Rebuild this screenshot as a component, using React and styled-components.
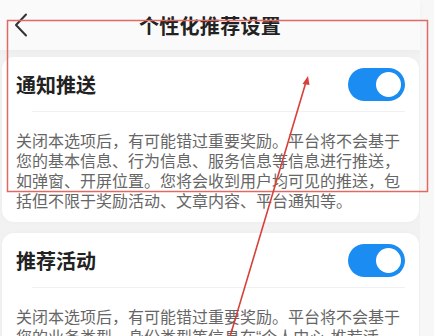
import styled, { createGlobalStyle } from "styled-components";

const GlobalStyle = createGlobalStyle`
  html, body {
    margin: 0;
    padding: 0;
    background: #f2f2f2;
  }
  body {
    font-family: "Noto Sans CJK SC", "Noto Sans", sans-serif;
  }
`;

const Page = styled.div`
  position: relative;
  width: 434px;
  height: 336px;
  overflow: hidden;
  display: flex;
  align-items: flex-start;
  background: #f2f2f2;
`;

const Main = styled.div`
  width: 420px;
  flex-shrink: 0;
`;

const SideStrip = styled.div`
  align-self: stretch;
  flex: 1;
  background: #f7f7f7;
`;

const Header = styled.div`
  position: relative;
  height: 50px;
  display: flex;
  align-items: center;
  justify-content: center;
  background: #fafafa;
  box-shadow: 0 2px 6px rgba(0, 0, 0, 0.03);
`;

const BackButton = styled.div`
  position: absolute;
  left: 14px;
  top: 12px;
  width: 18px;
  height: 26px;
  display: flex;
  align-items: center;
`;

const Title = styled.h1`
  margin: 0;
  font-size: 20px;
  font-weight: 700;
  color: #222;
  letter-spacing: 0.3px;
`;

const List = styled.div`
  display: flex;
  flex-direction: column;
  gap: 11px;
  padding: 7px 1px 0 2px;
`;

const Card = styled.div`
  background: #fff;
  border-radius: 12px;
  padding: 0 14px 12px 14px;
  box-shadow: 0 0 4px rgba(0, 0, 0, 0.03);
`;

const CardHead = styled.div`
  height: 54px;
  display: flex;
  align-items: center;
  justify-content: space-between;
`;

const CardTitle = styled.div`
  font-size: 20px;
  font-weight: 700;
  color: #222;
`;

const Switch = styled.div`
  width: 57px;
  height: 33px;
  border-radius: 17px;
  background: ${(props) => (props.$on ? "#1a8cf2" : "#d8d8d8")};
  display: flex;
  align-items: center;
  justify-content: ${(props) => (props.$on ? "flex-end" : "flex-start")};
  padding: 0 4px;
  box-sizing: border-box;
`;

const Knob = styled.div`
  width: 25px;
  height: 25px;
  border-radius: 50%;
  background: #fff;
`;

const Divider = styled.div`
  height: 1px;
  background: #f0f0f0;
  margin-left: 16px;
`;

const Desc = styled.p`
  margin: 18px 0 0 0;
  font-size: 16px;
  line-height: 20px;
  color: #666;
`;

const Latin = styled.span`
  font-family: "Liberation Sans", sans-serif;
`;

const Annotation = styled.svg`
  position: absolute;
  left: 0;
  top: 0;
  pointer-events: none;
`;

const settings = [
  {
    title: "通知推送",
    on: true,
    desc: "关闭本选项后，有可能错过重要奖励。平台将不会基于您的基本信息、行为信息、服务信息等信息进行推送，如弹窗、开屏位置。您将会收到用户均可见的推送，包括但不限于奖励活动、文章内容、平台通知等。",
  },
  {
    title: "推荐活动",
    on: true,
    desc: (
      <>
        关闭本选项后，有可能错过重要奖励。平台将不会基于您的业务类型、身份类型等信息在<Latin>“</Latin>个人中心<Latin>-</Latin>推荐活动<Latin>”</Latin>中为您推荐个性化的活动内容。
      </>
    ),
  },
];

const App = () => {
  return (
    <Page>
      <GlobalStyle />
      <Main>
        <Header>
          <BackButton>
            <svg width="14" height="24" viewBox="0 0 14 24">
              <path d="M12 1.5 L2 12 L12 22.5" fill="none" stroke="#333" strokeWidth="2" strokeLinecap="round" strokeLinejoin="round" />
            </svg>
          </BackButton>
          <Title>个性化推荐设置</Title>
        </Header>
        <List>
          {settings.map((item) => (
            <Card key={item.title}>
              <CardHead>
                <CardTitle>{item.title}</CardTitle>
                <Switch $on={item.on}>
                  <Knob />
                </Switch>
              </CardHead>
              <Divider />
              <Desc>{item.desc}</Desc>
            </Card>
          ))}
        </List>
      </Main>
      <SideStrip />
      <Annotation width="434" height="336" viewBox="0 0 434 336">
        <rect x="7.5" y="20.5" width="420" height="171" fill="none" stroke="#e06a63" strokeWidth="1.5" />
        <line x1="306" y1="82" x2="229" y2="340" stroke="#d8403a" strokeWidth="1.6" />
        <polygon points="308,76 302.5,84 309.5,85" fill="#d8403a" />
      </Annotation>
    </Page>
  );
};

export default App;
